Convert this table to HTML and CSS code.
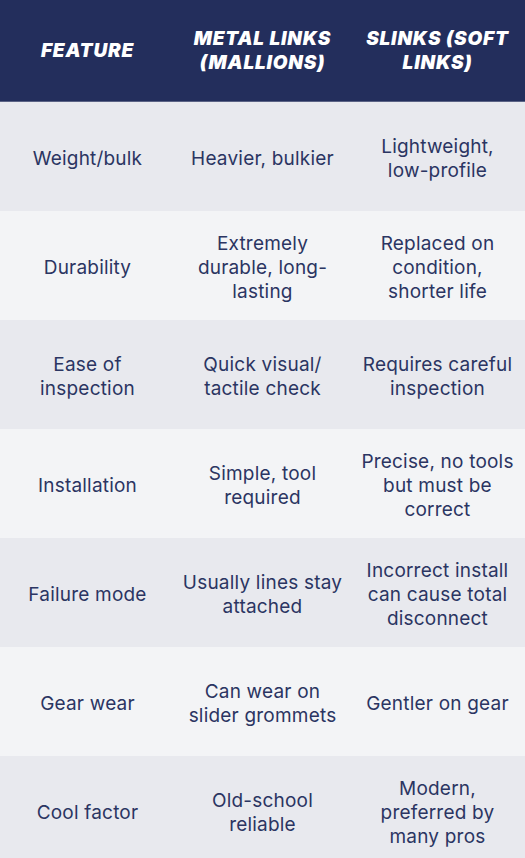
FILE: index.html
```html
<!DOCTYPE html>
<html lang="en">
<head>
<meta charset="utf-8">
<link rel="stylesheet" href="styles.css">
</head>
<body>
<div class="table">
  <div class="row head">
    <div class="cell">Feature</div>
    <div class="cell">Metal Links (Mallions)</div>
    <div class="cell">Slinks (Soft Links)</div>
  </div>
  <div class="row odd">
    <div class="cell">Weight/bulk</div>
    <div class="cell">Heavier, bulkier</div>
    <div class="cell">Lightweight,<br>low-profile</div>
  </div>
  <div class="row even">
    <div class="cell">Durability</div>
    <div class="cell">Extremely<br>durable, long-<br>lasting</div>
    <div class="cell">Replaced on<br>condition,<br>shorter life</div>
  </div>
  <div class="row odd">
    <div class="cell">Ease of<br>inspection</div>
    <div class="cell">Quick visual/<br>tactile check</div>
    <div class="cell">Requires careful<br>inspection</div>
  </div>
  <div class="row even">
    <div class="cell">Installation</div>
    <div class="cell">Simple, tool<br>required</div>
    <div class="cell">Precise, no tools<br>but must be<br>correct</div>
  </div>
  <div class="row odd">
    <div class="cell">Failure mode</div>
    <div class="cell">Usually lines stay<br>attached</div>
    <div class="cell">Incorrect install<br>can cause total<br>disconnect</div>
  </div>
  <div class="row even">
    <div class="cell">Gear wear</div>
    <div class="cell">Can wear on<br>slider grommets</div>
    <div class="cell">Gentler on gear</div>
  </div>
  <div class="row odd">
    <div class="cell">Cool factor</div>
    <div class="cell">Old-school<br>reliable</div>
    <div class="cell">Modern,<br>preferred by<br>many pros</div>
  </div>
</div>
</body>
</html>
```
FILE: styles.css
```css
html, body {
  margin: 0;
  padding: 0;
  background: #e8e9ee;
}
.table {
  width: 525px;
  font-family: Inter, "Noto Sans", sans-serif;
  color: #2b3562;
}
.row {
  display: grid;
  grid-template-columns: 175px 175px 175px;
  height: 109px;
}
.cell {
  display: flex;
  align-items: center;
  justify-content: center;
  text-align: center;
  font-size: 19px;
  letter-spacing: 0.2px;
  line-height: 24px;
  padding: 4px 2px 0;
}
.head {
  height: 101px;
  background: #232e5c;
  border-bottom: 1px solid #5b6385;
  color: #ffffff;
}
.head .cell {
  font-weight: 900;
  font-style: italic;
  text-transform: uppercase;
  font-size: 19px;
  letter-spacing: 0.8px;
  line-height: 24px;
  padding: 0 2px;
}
.odd {
  background: #e8e9ee;
}
.even {
  background: #f3f4f6;
}
```
